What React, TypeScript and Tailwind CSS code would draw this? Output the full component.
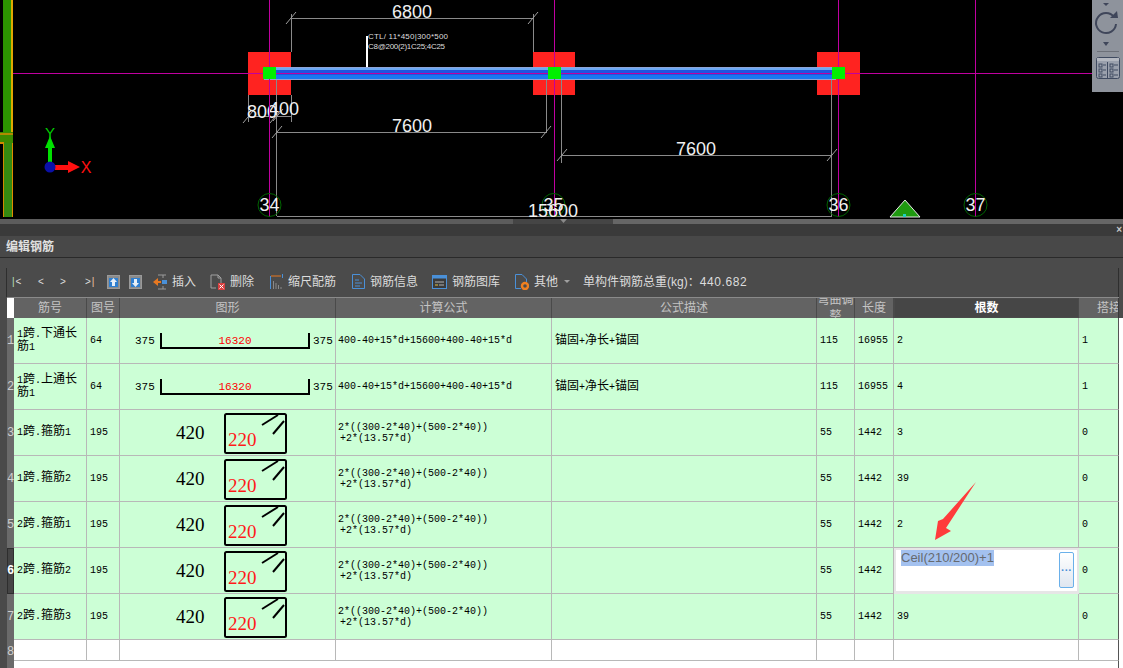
const gridCols = "grid w-[1112px] grid-cols-[7px_73px_33px_216px_216px_265px_38px_39px_185px_40px]"

const stirrupFormula = ["2*((300-2*40)+(500-2*40))", "+2*(13.57*d)"]
const longFormula = ["400-40+15*d+15600+400-40+15*d"]

const rows = [
  { no: "1", name: "1跨.下通长筋1", shape: "64", fig: "64", formula: longFormula, desc: "锚固+净长+锚固", bend: "115", len: "16955", count: "2", lap: "1" },
  { no: "2", name: "1跨.上通长筋1", shape: "64", fig: "64", formula: longFormula, desc: "锚固+净长+锚固", bend: "115", len: "16955", count: "4", lap: "1" },
  { no: "3", name: "1跨.箍筋1", shape: "195", fig: "195", formula: stirrupFormula, desc: "", bend: "55", len: "1442", count: "3", lap: "0" },
  { no: "4", name: "1跨.箍筋2", shape: "195", fig: "195", formula: stirrupFormula, desc: "", bend: "55", len: "1442", count: "39", lap: "0" },
  { no: "5", name: "2跨.箍筋1", shape: "195", fig: "195", formula: stirrupFormula, desc: "", bend: "55", len: "1442", count: "2", lap: "0" },
  { no: "6", name: "2跨.箍筋2", shape: "195", fig: "195", formula: stirrupFormula, desc: "", bend: "55", len: "1442", count: "", lap: "0", editing: true },
  { no: "7", name: "2跨.箍筋3", shape: "195", fig: "195", formula: stirrupFormula, desc: "", bend: "55", len: "1442", count: "39", lap: "0" },
]

function MixedText({ text }: { text: string }) {
  return (
    <>
      {text.split(/([\u4e00-\u9fff]+)/).map((part, i) =>
        /[\u4e00-\u9fff]/.test(part) ? (
          <span key={i} className="text-[12px]">{part}</span>
        ) : (
          <span key={i} className="text-[10px]">{part}</span>
        ),
      )}
    </>
  )
}

function Dim({ x1, y1, x2, y2 }: { x1: number; y1: number; x2: number; y2: number }) {
  return <line x1={x1} y1={y1} x2={x2} y2={y2} stroke="#8a8a8a" strokeWidth="1" />
}

function Tick({ x, y }: { x: number; y: number }) {
  return <line x1={x - 5} y1={y + 6} x2={x + 5} y2={y - 6} stroke="#a0a0a0" strokeWidth="1" />
}

function Label({ x, y, children, size = 18 }: { x: number; y: number; children: string; size?: number }) {
  return (
    <text x={x} y={y} fill="#f0f0f0" fontSize={size} textAnchor="middle" fontFamily="Liberation Sans, sans-serif">
      {children}
    </text>
  )
}

function Canvas() {
  const magenta = "#c000a0"
  return (
    <div className="relative h-[219px] bg-black overflow-hidden">
      <svg width="1123" height="219" className="block">
        {/* wall on the far left */}
        <rect x="3" y="0" width="9" height="133" fill="#2c9400" />
        <rect x="11" y="0" width="2" height="133" fill="#e0a800" />
        <rect x="0" y="132" width="13" height="11" fill="#3c8a00" />
        <rect x="0" y="133" width="13" height="2" fill="#b08a00" />
        <rect x="4" y="143" width="9" height="74" fill="#358a10" />
        <rect x="0" y="142" width="4" height="2" fill="#d08a00" />
        <rect x="3" y="143" width="1" height="74" fill="#d08a00" />
        <rect x="12" y="143" width="1" height="74" fill="#e08a00" />

        {/* columns */}
        <rect x="248" y="52" width="43" height="43" fill="#ff2320" />
        <rect x="533" y="52" width="42" height="43" fill="#ff2320" />
        <rect x="817" y="52" width="43" height="43" fill="#ff2320" />

        {/* beam */}
        <rect x="264" y="67" width="572" height="13" fill="#8ea4d8" />
        <rect x="265" y="68" width="570" height="2" fill="#6aa8f4" />
        <rect x="265" y="70" width="570" height="5" fill="#1f55e0" />
        <rect x="265" y="75" width="570" height="4" fill="#1a78f0" />

        {/* dimensions */}
        <Dim x1={291} y1={18.5} x2={533} y2={18.5} />
        <Dim x1={291.5} y1={14} x2={291.5} y2={52} />
        <Dim x1={533.5} y1={14} x2={533.5} y2={52} />
        <Tick x={291} y={18} />
        <Tick x={533} y={18} />
        <Label x={412} y={18}>6800</Label>

        <line x1="367" y1="36" x2="367" y2="67" stroke="#ffffff" strokeWidth="2" />
        <text x="368" y="39" fill="#dddddd" fontSize="8" textLength="80" fontFamily="Liberation Sans, sans-serif">CTL/ 11*450|300*500</text>
        <text x="368" y="49" fill="#dddddd" fontSize="8" textLength="77" fontFamily="Liberation Sans, sans-serif">C8@200(2)1C25;4C25</text>

        <Dim x1={248} y1={116.5} x2={291} y2={116.5} />
        <Dim x1={248.5} y1={95} x2={248.5} y2={122} />
        <Dim x1={276.5} y1={80} x2={276.5} y2={216} />
        <Dim x1={291.5} y1={95} x2={291.5} y2={122} />
        <Tick x={248} y={117} />
        <Tick x={275} y={117} />
        <Tick x={278} y={115} />
        <Label x={262} y={118}>800</Label>
        <Label x={284} y={115}>400</Label>

        <Dim x1={277} y1={132.5} x2={547} y2={132.5} />
        <Dim x1={546.5} y1={80} x2={546.5} y2={132} />
        <Tick x={277} y={132} />
        <Tick x={546} y={132} />
        <Label x={412} y={132}>7600</Label>

        <Dim x1={562} y1={155.5} x2={832} y2={155.5} />
        <Dim x1={561.5} y1={80} x2={561.5} y2={163} />
        <Dim x1={831.5} y1={80} x2={831.5} y2={216} />
        <Tick x={562} y={155} />
        <Tick x={832} y={155} />
        <Label x={696} y={155}>7600</Label>

        <Dim x1={277} y1={216.5} x2={832} y2={216.5} />

        {/* axis lines */}
        <rect x="13" y="73" width="1079" height="1" fill={magenta} />
        <rect x="269" y="0" width="1" height="217" fill={magenta} />
        <rect x="554" y="0" width="1" height="217" fill={magenta} />
        <rect x="838" y="0" width="1" height="217" fill={magenta} />
        <rect x="975" y="0" width="1" height="217" fill={magenta} />

        {/* nodes */}
        <rect x="263" y="67" width="13" height="12" fill="#00f000" />
        <rect x="548" y="67" width="13" height="12" fill="#00f000" />
        <rect x="832" y="67" width="13" height="12" fill="#00f000" />

        {/* grid bubbles */}
        {[
          [269.5, "34"],
          [553.5, "35"],
          [838.5, "36"],
          [975.5, "37"],
        ].map(([x, label]) => (
          <g key={label as string}>
            <circle cx={x as number} cy="205" r="11.5" fill="none" stroke="#006400" />
            <Label x={x as number} y={211}>{label as string}</Label>
          </g>
        ))}
        <Label x={553} y={217}>15600</Label>

        <polygon points="890,217 905,200 920,217" fill="#1f9a10" stroke="#e8e8e8" strokeWidth="1" />
        <rect x="903" y="214" width="3" height="3" fill="#20d0c0" />

        {/* axis gizmo */}
        <rect x="48" y="147" width="4" height="16" fill="#00e000" />
        <polygon points="45,148 50,136 55,148" fill="#00e000" />
        <text x="50" y="138" fill="#00d000" fontSize="15" textAnchor="middle" fontFamily="Liberation Sans, sans-serif">Y</text>
        <rect x="55" y="165" width="15" height="5" fill="#ff1010" />
        <polygon points="68,161 80,167 68,173" fill="#ff1010" />
        <text x="86" y="173" fill="#ff1010" fontSize="16" textAnchor="middle" fontFamily="Liberation Sans, sans-serif">X</text>
        <circle cx="50" cy="167" r="5.5" fill="#0a10a8" />
      </svg>

      <div className="absolute right-0 top-0 w-[31px] h-[92px] bg-[#8e939c] flex flex-col items-center">
        <svg width="31" height="92">
          <polygon points="11,3 17,3 14,6" fill="#3f465a" />
          <path d="M22 17 A10 10 0 1 0 24 24" fill="none" stroke="#3f465a" strokeWidth="2" />
          <polygon points="18,18 26,18 25,11" fill="#3f465a" />
          <polygon points="11,42 17,42 14,46" fill="#3f465a" />
          <line x1="5" y1="51.5" x2="27" y2="51.5" stroke="#6c7078" />
          <rect x="4.5" y="57.5" width="23" height="21" rx="2" fill="#9aa0ac" stroke="#3f4a60" />
          <line x1="15.5" y1="62" x2="15.5" y2="78" stroke="#3f4a60" />
          <rect x="5" y="58" width="22" height="3" fill="#b4b8c0" />
          {[65, 70, 75].map((y) => (
            <g key={y}>
              <rect x="7" y={y - 1} width="3" height="3" fill="none" stroke="#3f4a60" />
              <line x1="11" y1={y} x2="14" y2={y} stroke="#3f4a60" />
              <rect x="18" y={y - 1} width="3" height="3" fill="none" stroke="#3f4a60" />
              <line x1="22" y1={y} x2="26" y2={y} stroke="#3f4a60" />
            </g>
          ))}
        </svg>
      </div>
    </div>
  )
}

function UpIcon({ down }: { down?: boolean }) {
  return (
    <svg width="13" height="14">
      <rect x="0.5" y="0.5" width="12" height="13" fill="#8b8b8b" stroke="#9a9a9a" />
      <rect x="2" y="3" width="9" height="9" fill="#2f7fd0" />
      {down ? (
        <path d="M6.5 12 L3 8 H5 V4 H8 V8 H10 Z" fill="#e8f0f8" />
      ) : (
        <path d="M6.5 3 L3 7 H5 V11 H8 V7 H10 Z" fill="#e8f0f8" />
      )}
    </svg>
  )
}

function ToolButton({ icon, label, className }: { icon: React.ReactNode; label: string; className: string }) {
  return (
    <div className={`flex items-center gap-[5px] ${className}`}>
      {icon}
      <span>{label}</span>
    </div>
  )
}

function Toolbar() {
  return (
    <div className="h-[39px] bg-[#4b4b4b] pt-[10px] text-[12px] text-[#dcdcdc]">
      <div className="ml-[6px] mr-[4px] h-[29px] border-x border-[#2e2e2e] flex items-center pb-[2px]">
        <span className="ml-[5px] w-[26px] text-[10px] tracking-[1px]"><span className="text-[#b8e0c0]">|</span>&lt;</span>
        <span className="w-[22px] text-[10px]">&lt;</span>
        <span className="w-[25px] text-[10px]">&gt;</span>
        <span className="w-[22px] text-[10px] tracking-[1px]">&gt;<span className="text-[#f0c0a0]">|</span></span>
        <UpIcon />
        <span className="w-[9px]" />
        <UpIcon down />
        <ToolButton
          className="ml-[11px]"
          label="插入"
          icon={
            <svg width="14" height="16">
              <path d="M5 1 H13 M5 15 H13 M10 1 V4 M10 12 V15" stroke="#9a9a9a" fill="none" />
              <path d="M0 8 L5 4 V7 H8 V9 H5 V12 Z" fill="#e87820" />
              <rect x="9" y="6" width="5" height="4" fill="#4a90d8" />
            </svg>
          }
        />
        <ToolButton
          className="ml-[14px]"
          label="删除"
          icon={
            <svg width="15" height="16">
              <path d="M1 1 H8 L11 4 V9 M1 1 V14 H6" stroke="#a0a0a0" fill="none" />
              <path d="M8 1 V4 H11" stroke="#a0a0a0" fill="none" />
              <rect x="8" y="9" width="7" height="7" fill="#d84040" />
              <path d="M9.5 10.5 L13.5 14.5 M13.5 10.5 L9.5 14.5" stroke="#ffffff" />
            </svg>
          }
        />
        <ToolButton
          className="ml-[16px]"
          label="缩尺配筋"
          icon={
            <svg width="13" height="15">
              <path d="M0.5 2 V15" stroke="#4a90d8" />
              <path d="M1 2 H11" stroke="#e87820" />
              <path d="M12.5 0 V4" stroke="#4a90d8" />
              <path d="M3.5 7 V15 M6 9 V15 M8.5 11 V15 M11 13 V15" stroke="#8a8a8a" />
            </svg>
          }
        />
        <ToolButton
          className="ml-[16px]"
          label="钢筋信息"
          icon={
            <svg width="13" height="15">
              <path d="M0.5 0.5 H8 L12.5 5 V14.5 H0.5 Z" fill="none" stroke="#4a90d8" />
              <path d="M3 6 H7 M3 9 H10 M3 12 H8" stroke="#4a90d8" />
            </svg>
          }
        />
        <ToolButton
          className="ml-[14px]"
          label="钢筋图库"
          icon={
            <svg width="15" height="14">
              <rect x="0.5" y="0.5" width="14" height="13" fill="#3a3a3a" stroke="#4a90d8" />
              <rect x="0.5" y="0.5" width="14" height="3" fill="#4a90d8" />
              <path d="M3 7 H12" stroke="#b0b0b0" />
              <path d="M3 10 H6" stroke="#e0c040" />
              <path d="M7 10 H12" stroke="#b0b0b0" />
            </svg>
          }
        />
        <ToolButton
          className="ml-[15px]"
          label="其他"
          icon={
            <svg width="14" height="16">
              <path d="M6 14.5 H0.5 V0.5 H7 L11.5 5 V8" fill="none" stroke="#4a90d8" />
              <circle cx="10" cy="12" r="3" fill="none" stroke="#f08020" strokeWidth="2.4" />
            </svg>
          }
        />
        <svg width="6" height="3" className="ml-[6px]">
          <polygon points="0,0 6,0 3,3" fill="#a0a0a0" />
        </svg>
        <span className="ml-[13px]">单构件钢筋总重(kg)：<span className="tracking-[0.6px]">440.682</span></span>
      </div>
    </div>
  )
}

function HeaderCell({ children, className = "" }: { children: React.ReactNode; className?: string }) {
  return (
    <div className={`flex items-center justify-center overflow-hidden border-r border-[#4a4a4a] text-[12px] text-[#c4c4c4] ${className}`}>
      {children}
    </div>
  )
}

function TableHeader() {
  return (
    <div className="bg-[#4b4b4b]">
      <div className={`${gridCols} h-[21px] border-t border-[#8a8a8a] bg-[#636363]`}>
        <div className="bg-white" />
        <HeaderCell>筋号</HeaderCell>
        <HeaderCell>图号</HeaderCell>
        <HeaderCell>图形</HeaderCell>
        <HeaderCell>计算公式</HeaderCell>
        <HeaderCell>公式描述</HeaderCell>
        <HeaderCell className="leading-[16px] text-center">弯曲调整</HeaderCell>
        <HeaderCell>长度</HeaderCell>
        <HeaderCell className="bg-[#464646] border border-[#2e2e2e] !text-white font-bold">根数</HeaderCell>
        <HeaderCell className="!justify-start pl-[18px] whitespace-nowrap !border-[#3a3a3a]">搭接</HeaderCell>
      </div>
    </div>
  )
}

function BarShape() {
  return (
    <svg width="215" height="45" className="block">
      <text x="15" y="26" fontSize="11" fill="#000" fontFamily="Liberation Mono, monospace">375</text>
      <path d="M41 15 V30 H189 V15" fill="none" stroke="#000" strokeWidth="2" />
      <text x="115" y="26" fontSize="11" fill="#ff0000" textAnchor="middle" fontFamily="Liberation Mono, monospace">16320</text>
      <text x="193" y="26" fontSize="11" fill="#000" fontFamily="Liberation Mono, monospace">375</text>
    </svg>
  )
}

function StirrupShape() {
  return (
    <svg width="215" height="45" className="block">
      <text x="56" y="29" fontSize="19" fill="#000" fontFamily="Liberation Serif, serif">420</text>
      <rect x="105" y="4" width="61" height="39" rx="1.5" fill="none" stroke="#000" strokeWidth="2" />
      <text x="108" y="36" fontSize="19" fill="#ff1a1a" fontFamily="Liberation Serif, serif">220</text>
      <line x1="142" y1="15" x2="158" y2="5" stroke="#000" strokeWidth="2" />
      <line x1="153" y1="24" x2="164" y2="11" stroke="#000" strokeWidth="2" />
    </svg>
  )
}

function Cell({ children, className = "" }: { children?: React.ReactNode; className?: string }) {
  return (
    <div className={`flex items-center overflow-hidden border-r border-b border-[#b8b8b8] ${className}`}>
      {children}
    </div>
  )
}

function Gutter({ no, active }: { no: string; active?: boolean }) {
  return (
    <div className={`flex items-center justify-center text-[12px] ${active ? "bg-[#454545] font-bold text-white border border-[#2e2e2e]" : "bg-[#6a6a6a] text-[#cfcfcf]"}`}>
      {no}
    </div>
  )
}

function EditCell() {
  return (
    <div className="relative border-2 border-[#e6e6e6] border-b-[3px] bg-white pl-[5px] font-['Liberation_Sans',sans-serif]">
      <span className="inline-block h-[16px] bg-[#a3c1ef] text-[13px] leading-[16px] text-[#666a70]">Ceil(210/200)+1</span>
      <div className="absolute right-[3px] top-[2px] w-[15px] h-[36px] rounded-[2px] border border-[#6ab0ea] bg-gradient-to-b from-white to-[#dfe6f0] flex items-center justify-center text-[11px] font-bold leading-none text-[#4a90d8]">
        ···
      </div>
    </div>
  )
}

function DataRow({ row }: { row: (typeof rows)[number] }) {
  return (
    <div className={`${gridCols} h-[46px] bg-[#ccffd6] font-['Liberation_Mono','Noto_Sans_CJK_SC',monospace] text-[10px] text-black`}>
      <Gutter no={row.no} active={row.editing} />
      <Cell className="pl-[3px] pr-[4px] leading-[13px]">
        <div className="break-all"><MixedText text={row.name} /></div>
      </Cell>
      <Cell className="pl-[3px]">{row.fig}</Cell>
      <Cell>{row.shape === "64" ? <BarShape /> : <StirrupShape />}</Cell>
      <Cell className="pl-[2px] whitespace-pre leading-[11px]">
        <div>
          {row.formula.map((line, i) => (
            <div key={line} className={i === 1 ? "pl-[2px]" : ""}>{line}</div>
          ))}
        </div>
      </Cell>
      <Cell className="pl-[3px]">
        <div><MixedText text={row.desc} /></div>
      </Cell>
      <Cell className="pl-[3px]">{row.bend}</Cell>
      <Cell className="pl-[3px]">{row.len}</Cell>
      {row.editing ? <EditCell /> : <Cell className="pl-[3px]">{row.count}</Cell>}
      <Cell className="pl-[3px] !border-r-[#555555]">{row.lap}</Cell>
    </div>
  )
}

function BarTable() {
  return (
    <div className="flex-1 flex flex-col bg-white">
      <TableHeader />
      {rows.map((row) => (
        <DataRow key={row.no} row={row} />
      ))}
      <div className={`${gridCols} h-[21px] bg-white text-[12px]`}>
        <Gutter no="8" />
        {Array.from({ length: 8 }).map((_, i) => (
          <Cell key={i} />
        ))}
        <Cell className="!border-r-[#555555]" />
      </div>
      <div className="flex-1 flex">
        <div className="w-[7px] bg-[#6a6a6a]" />
        <div className="flex-1" />
        <div className="w-[1px] mr-[4px] bg-[#555555]" />
      </div>
    </div>
  )
}

export default function App() {
  return (
    <div className="relative w-[1123px] h-[668px] overflow-hidden flex flex-col bg-[#3c3c3c] font-['Liberation_Sans','Noto_Sans_CJK_SC',sans-serif]">
      <Canvas />
      <div className="flex h-[5px]">
        <div className="w-[513px] bg-[#5c5c5c]" />
        <div className="w-[100px] bg-[#454545] flex justify-center">
          <svg width="7" height="4"><polygon points="0,0 7,0 3.5,4" fill="#8a8a8a" /></svg>
        </div>
        <div className="flex-1 bg-[#666666]" />
      </div>
      <div className="h-[12px] bg-[#3a3a3a] flex justify-end items-center pr-[1px] text-[10px] leading-none font-bold text-[#c8c8c8]">×</div>
      <div className="h-[21px] bg-[#484848] pl-[6px] flex items-center text-[12px] font-bold text-[#e0e0e0]">编辑钢筋</div>
      <div className="h-[1px] bg-[#2a2a2a]" />
      <Toolbar />
      <div className="flex-1 flex">
        <div className="w-[7px] bg-[#4a4a4a]" />
        <BarTable />
      </div>

      {/* annotation arrow */}
      <svg width="60" height="70" className="absolute left-[925px] top-[476px]">
        <polygon points="51,6 18,43 13,45 10,64 26,55 21,52" fill="#ff3b3b" />
      </svg>
    </div>
  )
}
